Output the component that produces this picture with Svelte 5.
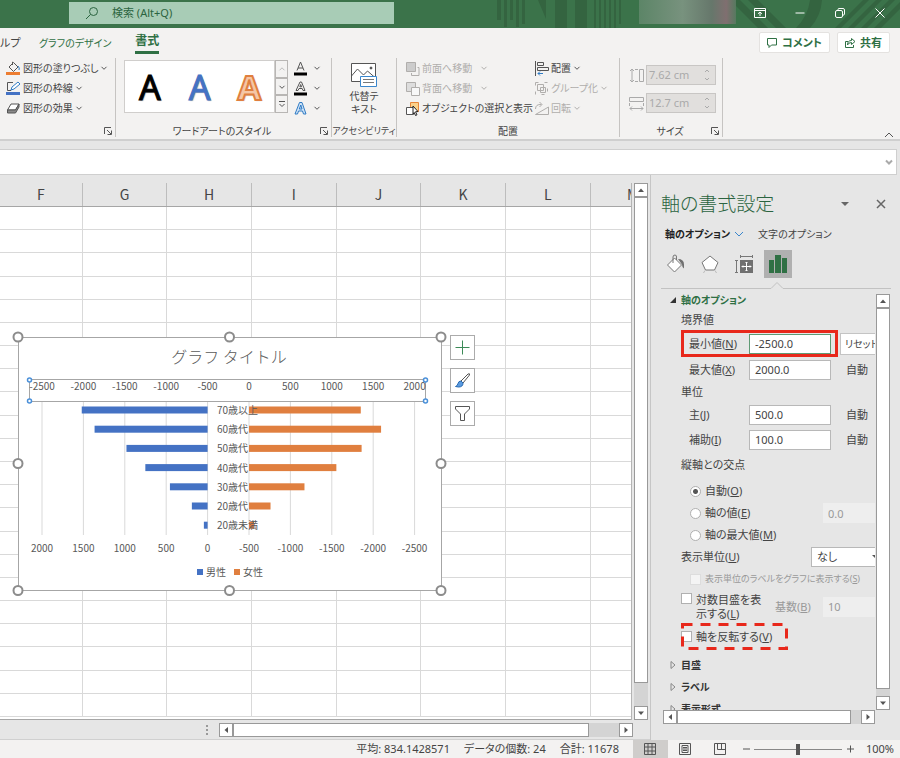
<script lang="ts">
  const columns = ['F', 'G', 'H', 'I', 'J', 'K', 'L', 'M'];
  const rows = Array.from({ length: 22 }, (_, i) => i);

  const ages = ['70歳以上', '60歳代', '50歳代', '40歳代', '30歳代', '20歳代', '20歳未満'];
  const men = [1520, 1365, 980, 752, 455, 190, 45];
  const women = [1350, 1595, 1360, 1055, 670, 260, 60];
  const topAxis = [-2500, -2000, -1500, -1000, -500, 0, 500, 1000, 1500, 2000];
  const bottomAxis = [2000, 1500, 1000, 500, 0, -500, -1000, -1500, -2000, -2500];

  // chart geometry
  const left = 32;
  const step = 41.4;
  const tick = (i: number) => left + i * step;
  const len = (v: number) => (v / 500) * step;
  const rowY = (i: number) => 82 + i * 19.2;
  const handles = [[8, 9], [219.5, 9], [431, 9], [8, 135.5], [431, 135.5], [8, 262.5], [219.5, 262.5], [431, 262.5]];

  let min = $state('-2500.0');
  let max = $state('2000.0');
  let major = $state('500.0');
  let minor = $state('100.0');
  let cross = $state('auto');
</script>

{#snippet chevron()}
  <svg class="chev" viewBox="0 0 8 8" width="8" height="8"><path d="M1.5 2.8 4 5.3 6.5 2.8" /></svg>
{/snippet}

{#snippet launcher()}
  <button class="launcher" aria-label="詳細">
    <svg viewBox="0 0 8 8" width="8" height="8"><path d="M.5 7V.5H7M3 3l4 4M7.5 3.500V7.500H3.500" /></svg>
  </button>
{/snippet}

{#snippet arrow(points: string, label: string)}
  <button class="arrow" aria-label={label}>
    <svg viewBox="0 0 8 8" width="8" height="8"><polygon {points} /></svg>
  </button>
{/snippet}

<div class="app">
  <header class="titlebar">
    <svg class="pattern" viewBox="0 0 410 28" width="410" height="28">
      <g fill="#346440">
        <path d="M7 0h4v20H7zM14 0h3v27h-3zM20 0h3v20h-3zM26 0h3v27h-3zM32 0h3v24h-3zM48 0h8v19zM65 0h12v28H65zM85 0h12v28H85zM104 0h2v28h-2zM109 0h2v28h-2zM114 0h2v28h-2zM119 0h2v28h-2zM124 0h2v28h-2zM129 0h2v24h-2z" />
        <path d="M240 0h10l28 28h-10zM258 0h10l28 28h-10zM320 0h12q-1 16-12 28h-14q12-12 14-28zM345 28 373 0h6l-28 28zM358 28 386 0h6l-28 28zM371 28 399 0h6l-28 28zM384 28l26-26v7l-19 19z" />
      </g>
    </svg>
    <label class="search">
      <svg viewBox="0 0 14 14" width="14" height="14"><circle cx="8.500" cy="5.500" r="4" /><path d="M5.500 8.500 1 13" /></svg>
      <input type="search" placeholder="検索 (Alt+Q)" />
    </label>
    <div class="account"></div>
    <div class="window">
      <button aria-label="リボンの表示オプション">
        <svg viewBox="0 0 12 12" width="12" height="12"><path d="M.5 1.500h11v9H.5zM.5 3.500h11M6 9V5M4 6.800 6 5l2 1.800" /></svg>
      </button>
      <button aria-label="最小化"><svg viewBox="0 0 12 12" width="12" height="12"><path d="M1.500 6h9" /></svg></button>
      <button aria-label="元に戻す">
        <svg viewBox="0 0 12 12" width="12" height="12"><rect x="1.500" y="3.500" width="7" height="7" rx="1.500" /><path d="M4 3V2.500Q4 1.500 5 1.500h4q1.500 0 1.500 1.500v4q0 1-1.500 1.200" /></svg>
      </button>
      <button aria-label="閉じる"><svg viewBox="0 0 12 12" width="12" height="12"><path d="m1.500 1.500 9 9m0-9-9 9" /></svg></button>
    </div>
  </header>

  <nav class="tabs">
    <a class="cut" href="#help">ルプ</a>
    <a class="context" href="#design">グラフのデザイン</a>
    <a class="current" href="#format">書式</a>
    <span class="grow"></span>
    <button>
      <svg viewBox="0 0 12 12" width="12" height="12"><path d="M1.500 1.500h9v6.500H5.500L3 10.500V8H1.500z" /></svg>コメント
    </button>
    <button>
      <svg viewBox="0 0 12 12" width="12" height="12"><path d="M4 4.500H1.500v6h8V8M7.500 1.500l3.500 3-3.500 3V5.500Q4.500 5.500 3.500 8q0-4.500 4-4.500z" /></svg>共有
    </button>
  </nav>

  <div class="ribbon">
    <section class="group shapes">
      <div class="stack">
        <button>
          <svg viewBox="0 0 15 15" width="15" height="15"><path d="M3 6 7.500 1.500 12 6 7.500 10.500zM6.500 4V.8" /><path d="M12 5q2 2 1 4" stroke="#2f7bc4" /><path d="M0 11h14v3H0z" fill="#ed7d31" stroke="none" /></svg>
          図形の塗りつぶし{@render chevron()}
        </button>
        <button>
          <svg viewBox="0 0 15 15" width="15" height="15"><path d="M7 1.500H1.500v8H5" /><path d="m5 9 1-3 6-5 2 2-6 5z" stroke="#2f7bc4" fill="#fff" /><path d="M0 11h14v3H0z" fill="#4472c4" stroke="none" /></svg>
          図形の枠線{@render chevron()}
        </button>
        <button>
          <svg viewBox="0 0 15 15" width="15" height="15"><path d="M1.500 9 5 3h8L9.500 9z" fill="#fff" /><path d="M1.500 9v3h8L13 6V3L9.500 9z" fill="#8a8a8a" /></svg>
          図形の効果{@render chevron()}
        </button>
      </div>
      <footer><span></span>{@render launcher()}</footer>
    </section>

    <section class="group wordart">
      <div class="body">
        <div class="gallery">
          <button class="sample black">A</button>
          <button class="sample blue">A</button>
          <button class="sample orange">A</button>
        </div>
        <div class="pager">
          <button class="off" aria-label="前へ"><svg viewBox="0 0 8 8" width="8" height="8"><path d="M1.500 5.300 4 2.800l2.500 2.500" /></svg></button>
          <button aria-label="次へ">{@render chevron()}</button>
          <button aria-label="その他"><svg viewBox="0 0 8 8" width="8" height="8"><path d="M1 1.500h6M1.500 4 4 6.500 6.500 4" /></svg></button>
        </div>
        <div class="stack letters">
          <button aria-label="文字の塗りつぶし"><svg viewBox="0 0 15 15" width="15" height="15"><path d="M4 9.500 7.500 1 11 9.500M5 7h5" /><path d="M1 11.500h13v3H1z" fill="#000" stroke="none" /></svg>{@render chevron()}</button>
          <button aria-label="文字の輪郭"><svg viewBox="0 0 15 15" width="15" height="15"><path d="m3 9.500 4-8.500h1.500l3.500 8.500h-2L9.200 7.500H6L5 9.500zM6.800 5.800 7.700 3.500l.9 2.300z" /><path d="M1 11.500h13v3H1z" fill="#000" stroke="none" /></svg>{@render chevron()}</button>
          <button aria-label="文字の効果"><svg viewBox="0 0 15 15" width="15" height="15"><path d="m2 13 4.500-11.500h2.500l4 11.500h-2.500l-1-3H5.500l-1 3zM6.300 8 7.800 4 9 8z" stroke="#2f7bc4" fill="#cfe3f7" /></svg>{@render chevron()}</button>
        </div>
      </div>
      <footer><span>ワードアートのスタイル</span>{@render launcher()}</footer>
    </section>

    <section class="group access">
      <button class="big">
        <svg viewBox="0 0 28 26" width="28" height="26"><path d="M1.500 1.500h24v18h-24z" fill="#fff" /><path d="m1.500 14 6-7 6 6 4-4 8 7" /><circle cx="21" cy="6" r="1" fill="#333" /><path d="M10.500 14.500h16v10h-16z" fill="#fff" stroke="#3a86cc" /><path d="M13 17.500h11M13 20.500h11" stroke="#777" /></svg>
        <span>代替テ<br />キスト</span>
      </button>
      <footer><span>アクセシビリティ</span></footer>
    </section>

    <section class="group arrange">
      <div class="body">
        <div class="stack">
          <button disabled>
            <svg viewBox="0 0 15 15" width="15" height="15"><path d="M1.500 1.500h9v9h-9z" fill="#ccc" /><path d="M12.500 6.500h1.500v8H6.500V12" /></svg>
            前面へ移動<i></i>{@render chevron()}
          </button>
          <button disabled>
            <svg viewBox="0 0 15 15" width="15" height="15"><path d="M1.500 1.500h9v9h-9z" fill="#ddd" /><path d="M6.500 6.500h8v8h-8z" fill="#f8f8f8" /></svg>
            背面へ移動<i></i>{@render chevron()}
          </button>
          <button>
            <svg viewBox="0 0 15 15" width="15" height="15"><path d="M5.500 1.500h8v9h-8z" fill="#fbd28b" stroke="#e8863a" /><path d="M1.500 6.500h7v7h-7z" fill="#fff" /><path d="m8 5 5 5.500-2.500.3 1.500 3-1.500.7-1.300-3L8 13z" fill="#fff" stroke="#222" /></svg>
            オブジェクトの選択と表示
          </button>
        </div>
        <div class="stack">
          <button>
            <svg viewBox="0 0 15 15" width="15" height="15"><path d="M1.500 0v15M3.500 1.500h6v3h-6zM3.500 6.500h11v3h-11z" /><path d="M9 12.500H4M6 10.500l-2 2 2 2" stroke="#2f7bc4" /></svg>
            配置{@render chevron()}
          </button>
          <button disabled>
            <svg viewBox="0 0 15 15" width="15" height="15"><path d="M3.500 3.500h6v6h-6zM6.500 6.500h5v5h-5z" /><path d="M1.500 1.500h12v12h-12z" stroke-dasharray="3 6" /></svg>
            グループ化{@render chevron()}
          </button>
          <button disabled>
            <svg viewBox="0 0 15 15" width="15" height="15"><path d="M1.500 13.500h13V6zM1.500 8q0-5 6-4.500M5.500 1l2.500 2.500L5.500 6" /></svg>
            回転{@render chevron()}
          </button>
        </div>
      </div>
      <footer><span>配置</span></footer>
    </section>

    <section class="group size">
      <div class="sizes">
        <label>
          <svg viewBox="0 0 15 15" width="15" height="15"><path d="M3 1v13M1 3l2-2 2 2M1 12l2 2 2-2M6 1.500h3M6 13.500h3M10.500 1.500h4v12h-4z" /></svg>
          <span class="spin"><input aria-label="高さ" value="7.62 cm" disabled /><svg viewBox="0 0 8 14" width="8" height="14"><path d="M2 4l2-2 2 2M2 10l2 2 2-2" /></svg></span>
        </label>
        <label>
          <svg viewBox="0 0 15 15" width="15" height="15"><path d="M.5 1.500h14v4H.5zM.5 7v3M14.500 7v3M1 12.500h13M3 10.500l-2 2 2 2M12 10.500l2 2-2 2" /></svg>
          <span class="spin"><input aria-label="幅" value="12.7 cm" disabled /><svg viewBox="0 0 8 14" width="8" height="14"><path d="M2 4l2-2 2 2M2 10l2 2 2-2" /></svg></span>
        </label>
      </div>
      <footer><span>サイズ</span>{@render launcher()}</footer>
    </section>
    <button class="collapse" aria-label="リボンを折りたたむ"><svg viewBox="0 0 10 8" width="10" height="8"><path d="m1 6 4-4 4 4" /></svg></button>
  </div>

  <div class="formula">
    <input aria-label="数式バー" />
    <svg viewBox="0 0 8 8" width="8" height="8"><path d="M1 2.500 4 5.500l3-3" /></svg>
  </div>

  <main>
    <div class="book">
      <div class="view">
        <div class="sheet">
          <div class="cols head">
            {#each columns as c}<div><span>{c}</span></div>{/each}
          </div>
          <div class="cells">
            {#each rows as r (r)}
              <div class="cols">{#each columns as c}<div></div>{/each}</div>
            {/each}
          </div>
        </div>
        <div class="vbar">
          {@render arrow('1,6 4,2.500 7,6', '上へ')}
          <div class="thumb"></div>
          {@render arrow('1,2.500 4,6 7,2.500', '下へ')}
        </div>

        <svg class="chart" viewBox="0 0 440 272" width="440" height="272">
          <rect x="8.500" y="9.500" width="423" height="253" fill="#fff" stroke="#a6a6a6" />
          <text class="title" x="219" y="35">グラフ タイトル</text>
          {#each topAxis as _, i}
            <path d="M{tick(i)} 73V207" stroke="#d9d9d9" />
          {/each}
          {#each ages as age, i}
            <rect x={tick(4) - len(men[i])} y={rowY(i) - 3.5} width={len(men[i])} height="7" fill="#4472c4" />
            <rect x={tick(5)} y={rowY(i) - 3.5} width={len(women[i])} height="7" fill="#e07f3f" />
            <text x="207" y={rowY(i) + 4}>{age}</text>
          {/each}
          <rect x="19.500" y="51.500" width="396" height="22" fill="#fff" stroke="#a6a6a6" />
          {#each topAxis as v, i}
            <text class="mid" x={tick(i)} y="62">{v}</text>
          {/each}
          {#each bottomAxis as v, i}
            <text class="mid" x={tick(i)} y="224">{v}</text>
          {/each}
          {#each [[19.5, 52], [415.5, 52], [19.5, 73], [415.5, 73]] as [x, y]}
            <circle cx={x} cy={y} r="2" fill="#fff" stroke="#4a90d9" stroke-width="1.500" />
          {/each}
          <rect x="187" y="241" width="6" height="6" fill="#4472c4" />
          <text x="196" y="248">男性</text>
          <rect x="224" y="241" width="6" height="6" fill="#e07f3f" />
          <text x="233" y="248">女性</text>
          {#each handles as [x, y]}
            <circle cx={x} cy={y} r="4.500" fill="#fff" stroke="#8c8c8c" stroke-width="2" />
          {/each}
        </svg>

        <div class="tools">
          <button aria-label="グラフ要素"><svg viewBox="0 0 17 17" width="17" height="17"><path d="M8.500 1.500v14M1.500 8.500h14" stroke="#3c8a57" /></svg></button>
          <button aria-label="グラフ スタイル">
            <svg viewBox="0 0 17 17" width="17" height="17"><path d="M7 9 14 2q2-1 1.500 1L9 11z" /><path d="M1.500 14.500q2-.5 2.500-3t3-2.500l2 2q0 4-4.500 4z" fill="#5b9be0" stroke="#2468b2" /></svg>
          </button>
          <button aria-label="グラフ フィルター"><svg viewBox="0 0 17 17" width="17" height="17"><path d="M1.500 1.500h14V4l-5 5v6.500h-4V9l-5-5z" /></svg></button>
        </div>
      </div>
      <div class="hrow">
        <svg class="grip" viewBox="0 0 3 12" width="3" height="12"><path d="M0 1h2v2H0zM0 5h2v2H0zM0 9h2v2H0z" /></svg>
        <div class="hbar">
          {@render arrow('6,1 2.500,4 6,7', '左へ')}
          <div class="thumb"></div>
          {@render arrow('2.500,1 6,4 2.500,7', '右へ')}
        </div>
      </div>
    </div>

    <aside>
      <div class="panehead">
        <h2>軸の書式設定</h2>
        <button aria-label="作業ウィンドウのオプション"><svg viewBox="0 0 10 10" width="10" height="10"><polygon points="1,3 9,3 5,7" fill="#666" stroke="none" /></svg></button>
        <button aria-label="閉じる"><svg viewBox="0 0 10 10" width="10" height="10"><path d="m1 1 8 8m0-8L1 9" stroke="#666" stroke-width="1.500" /></svg></button>
      </div>
      <div class="panetabs">
        <button class="on">軸のオプション<svg viewBox="0 0 10 8" width="10" height="8"><path d="m1 2 4 4 4-4" stroke="#3a86cc" /></svg></button>
        <button>文字のオプション</button>
      </div>
      <div class="kinds">
        <button aria-label="塗りつぶしと線">
          <svg viewBox="0 0 20 20" width="20" height="20"><path d="m1.500 11 7-7 7 7-7 7z" fill="#fff" /><path d="M7 9V3q0-2 2-2t1.500 3v2" /><path d="M12 5q6 0 6 5.500v4q-2-1-2-4z" fill="#707070" stroke="none" /></svg>
        </button>
        <button aria-label="効果">
          <svg viewBox="0 0 20 20" width="20" height="20"><path d="m10 2 8 6.500-3.500 7.500h-9L2 8.500z" fill="#fff" /><path d="M5 16.500 3.500 19M15 16.500l1.500 2.500" stroke="#bbb" /></svg>
        </button>
        <button aria-label="サイズとプロパティ">
          <svg viewBox="0 0 20 20" width="20" height="20"><path d="M6.500 2.500h12M6.500 1v3M18.500 1v3M2.500 6v13M1 6.500h3M1 18.500h3" /><path d="M6 6h13v13H6z" fill="#707070" stroke="none" /><path d="M12.500 8v9M8 12.500h9M11.500 9l1-1 1 1M11.500 16l1 1 1-1M9 11.500l-1 1 1 1M16 11.500l1 1-1 1" stroke="#fff" /></svg>
        </button>
        <button class="on" aria-label="軸のオプション">
          <svg viewBox="0 0 20 20" width="20" height="20"><path d="M1 6h5v13H1zM7 1h6v18H7zM14 4h5v15h-5z" fill="#2f7044" stroke="none" /></svg>
        </button>
      </div>
      <svg class="notch" viewBox="0 0 230 9" width="230" height="9"><path d="M0 7.500h110l6-6 6 6h108" /></svg>

      <div class="scroller">
        <div class="port">
          <form class="options">
            <h3 class="open"><svg viewBox="0 0 8 8" width="8" height="8"><polygon points="7,1 7,7 1,7" /></svg>軸のオプション</h3>
            <h4>境界値</h4>
            <div class="line first">
              <div class="marked">
                <label for="min">最小値(<u>N</u>)</label>
                <input id="min" class="focus" bind:value={min} />
              </div>
              <button type="button" class="reset">リセット(R)</button>
            </div>
            <div class="line field"><label for="max">最大値(<u>X</u>)</label><input id="max" bind:value={max} /><span>自動</span></div>
            <h4>単位</h4>
            <div class="line field"><label for="major">主(<u>J</u>)</label><input id="major" bind:value={major} /><span>自動</span></div>
            <div class="line field"><label for="minor">補助(<u>I</u>)</label><input id="minor" bind:value={minor} /><span>自動</span></div>
            <h4 class="cross">縦軸との交点</h4>
            <div class="line in"><label><input type="radio" value="auto" bind:group={cross} />自動(<u>O</u>)</label></div>
            <div class="line in">
              <label><input type="radio" value="value" bind:group={cross} />軸の値(<u>E</u>)</label>
              <input class="side" aria-label="軸の値" value="0.0" disabled />
            </div>
            <div class="line in"><label><input type="radio" value="max" bind:group={cross} />軸の最大値(<u>M</u>)</label></div>
            <div class="line">
              <label for="unit">表示単位(<u>U</u>)</label>
              <div class="select">
                <select id="unit"><option>なし</option></select>
                <svg viewBox="0 0 8 8" width="8" height="8"><polygon points="1,2 7,2 4,5" /></svg>
              </div>
            </div>
            <div class="line in off small"><label><input type="checkbox" disabled />表示単位のラベルをグラフに表示する(<u>S</u>)</label></div>
            <div class="line log">
              <label><input type="checkbox" /><span>対数目盛を表<br />示する(<u>L</u>)</span></label>
              <label class="off" for="base">基数(<u>B</u>)</label>
              <input id="base" class="side" value="10" disabled />
            </div>
            <div class="line reverse">
              <label><input type="checkbox" />軸を反転する(<u>V</u>)</label>
              <svg viewBox="0 0 107 27" width="107" height="27"><rect x="1.500" y="1.500" width="104" height="24" /></svg>
            </div>
            {#each ['目盛', 'ラベル', '表示形式'] as name}
              <h3><svg viewBox="0 0 8 8" width="8" height="8"><path d="M2 .5 6 4 2 7.500z" /></svg>{name}</h3>
            {/each}
          </form>
        </div>
        <div class="vbar">
          {@render arrow('1,6 4,2.500 7,6', '上へ')}
          <div class="thumb"></div>
          {@render arrow('1,2.500 4,6 7,2.500', '下へ')}
        </div>
      </div>
      <div class="hbar">
        {@render arrow('6,1 2.500,4 6,7', '左へ')}
        <div class="thumb"></div>
        {@render arrow('2.500,1 6,4 2.500,7', '右へ')}
      </div>
    </aside>
  </main>

  <footer class="status">
    <span>平均: 834.1428571</span>
    <span>データの個数: 24</span>
    <span>合計: 11678</span>
    <div class="modes">
      <button class="on" aria-label="標準"><svg viewBox="0 0 14 12" width="14" height="12"><path d="M1.500.5h11v11h-11zM5 .5v11M9 .5v11M1.500 4h11M1.500 8h11" /></svg></button>
      <button aria-label="ページ レイアウト"><svg viewBox="0 0 14 12" width="14" height="12"><path d="M1.500.5h11v11h-11zM4 2.500h6v7H4zM5 4.500h4M5 6h4M5 7.500h4" /></svg></button>
      <button aria-label="改ページ プレビュー"><svg viewBox="0 0 14 12" width="14" height="12"><path d="M1.500.5h11v11h-11zM4.500.5v6h8M8.500.5v6" /></svg></button>
    </div>
    <button class="zoom" aria-label="縮小"><svg viewBox="0 0 8 8" width="8" height="8"><path d="M1 4h7" /></svg></button>
    <input type="range" aria-label="ズーム" min="0" max="100" value="50" />
    <button class="zoom" aria-label="拡大"><svg viewBox="0 0 8 8" width="8" height="8"><path d="M1 4h7M4.500 .5v7" /></svg></button>
    <span class="percent">100%</span>
  </footer>
</div>

<style>
:global(body) { margin: 0; }
.app {
  display: flex;
  flex-direction: column;
  height: 100vh;
  overflow: hidden;
  background: #e6e6e6;
  color: #444;
  font-family: "Noto Sans", "Noto Sans CJK JP", sans-serif;
  font-feature-settings: "palt";
  font-size: 11px;
  line-height: 14px;
  white-space: nowrap;
}
* { box-sizing: border-box; }
button, input, select {
  font: inherit;
  font-feature-settings: inherit;
  color: inherit;
  margin: 0;
  padding: 0;
  border: 0;
  background: none;
  border-radius: 0;
}
svg { flex: none; display: block; fill: none; stroke: #555; }
h2, h3, h4 { margin: 0; font-size: 11px; font-weight: 400; }

.titlebar { position: relative; flex: none; display: flex; height: 28px; background: #3b734a; }
.pattern { position: absolute; right: 0; top: 0; stroke: none; }
.search {
  display: flex;
  align-items: center;
  gap: 13px;
  flex: 0 1 325px;
  height: 22px;
  margin: 2px 0 0 69px;
  padding-left: 16px;
  background: #a8ccb6;
  color: #2b6440;
}
.search svg { stroke: #2b6440; }
.search input { flex: 1; min-width: 0; }
.search input::placeholder { color: #2b6440; opacity: 1; }
.account {
  position: relative;
  width: 97px;
  height: 24px;
  margin-left: auto;
  background: linear-gradient(90deg, #5c8567, #78927e 45%, #66776b 75%, #806f70 90%, #56795f);
}
.window { position: relative; display: flex; align-items: center; height: 25px; padding-left: 4px; }
.window button { display: flex; justify-content: center; width: 40px; }
.window svg { stroke: #fff; }

.tabs { flex: none; display: flex; align-items: center; height: 29px; padding-right: 10px; background: #f3f2f1; font-size: 12px; }
.tabs a { color: #444; text-decoration: none; }
.tabs .cut { width: 18px; font-size: 11px; }
.tabs .context { color: #2f7044; margin: 0 24px 0 21px; font-size: 10px; }
.tabs .current { color: #2f7044; font-weight: 700; height: 22px; padding-top: 2px; box-shadow: inset 0 -3px #2f7044; }
.grow { flex: 1; }
.tabs button {
  display: flex;
  align-items: center;
  gap: 4px;
  height: 21px;
  margin-left: 7px;
  padding: 0 7px 0 6px;
  background: #fff;
  border: 1px solid #e4e2e0;
  border-radius: 2px;
  color: #2f7044;
  font-weight: 700;
  font-size: 11px;
}
.tabs button svg { stroke: #2f7044; }

.ribbon { flex: none; display: flex; height: 84px; background: #f3f2f1; border-bottom: 2px solid #cfcfcf; font-size: 10px; }
.group { display: flex; flex-direction: column; justify-content: space-between; border-right: 1px solid #c6c4c2; margin: 1px 0 2px; padding: 0 3px; }
.group footer { display: flex; align-items: center; height: 12px; line-height: 12px; }
.group footer span { flex: 1; text-align: center; }
.launcher svg { stroke: #555; }
.shapes { width: 116px; padding-left: 6px; }
.wordart { width: 216px; padding-left: 8px; }
.access { width: 65px; padding: 0; align-items: center; }
.access footer { font-size: 9px; }
.arrange { width: 223px; padding: 0 8px; }
.size { width: 103px; padding-left: 9px; }
.stack { display: flex; flex-direction: column; }
.stack button { display: flex; align-items: center; height: 20px; gap: 2px; }
.stack button:disabled { color: #b0aeac; }
.stack button:disabled svg { stroke: #b0aeac; }
.stack i { width: 4px; }
.body { display: flex; }
.gallery { display: flex; width: 151px; height: 53px; margin-top: 2px; background: #fff; border: 1px solid #d0cecc; }
.sample { flex: 1; font: 34px/50px "Noto Sans", sans-serif; text-shadow: 1px 1px 1px #aaa; }
.black { color: #000; -webkit-text-stroke: 1px #000; }
.blue { color: #4472c4; -webkit-text-stroke: 1px #4472c4; }
.orange { color: #f5c6a5; font-weight: 700; -webkit-text-stroke: 2px #e07f3f; }
.pager { display: flex; flex-direction: column; width: 13px; height: 53px; margin-top: 2px; }
.pager button { flex: 1; display: flex; align-items: center; justify-content: center; border: 1px solid #b8b6b4; }
.pager .off svg { stroke: #bbb; }
.letters { margin-left: 5px; }
.letters button { gap: 5px; }
.big { display: flex; flex-direction: column; align-items: center; gap: 2px; padding-top: 4px; line-height: 13px; }
.arrange .body { gap: 1px; }
.sizes { display: flex; flex-direction: column; gap: 8px; padding-top: 7px; font-size: 11px; }
.sizes label { display: flex; align-items: center; gap: 2px; }
.sizes svg { stroke: #aaa; }
.spin { display: flex; align-items: center; width: 70px; height: 20px; padding: 0 4px 0 2px; background: #e1dfdd; border: 1px solid #c8c6c4; color: #aaa; }
.spin input { flex: 1; min-width: 0; }
.collapse { margin: auto 6px 0 auto; }

.formula { flex: none; display: flex; align-items: center; height: 26px; margin: 8px 3px 0 0; padding-right: 3px; background: #fff; border: 1px solid #cfcfcf; border-left: 0; }
.formula input { flex: 1; }
.formula svg { stroke: #aaa; stroke-width: 2; }

main { flex: 1; display: flex; min-height: 0; }
.book { flex: 1; min-width: 0; display: flex; flex-direction: column; border-right: 1px solid #c6c6c6; }
.view { position: relative; flex: 1; display: flex; min-height: 0; padding: 8px 2px 0 0; }
.sheet { flex: 1; min-width: 0; display: flex; flex-direction: column; border-right: 1px solid #b4b4b4; background: #fff; }
.cols { display: grid; grid-template-columns: 84fr repeat(6, 86fr) 41fr; }
.cols div { min-width: 0; border-right: 1px solid #d9d9d9; border-bottom: 1px solid #d9d9d9; }
.cols div:last-child { border-right: 0; }
.head { height: 24px; background: #e6e6e6; border-bottom: 1px solid #a6a6a6; font: 14px/22px "Noto Sans CJK JP", sans-serif; }
.head div { overflow: hidden; text-align: center; border-bottom: 0; border-right-color: #bdbdbd; }
.head div:last-child span { display: block; width: 84px; }
.cells { flex: 1; display: grid; grid-template-rows: repeat(22, 1fr); padding-bottom: 2px; border-bottom: 1px solid #a6a6a6; }

.vbar, .hbar { display: flex; background: #d4d4d4; }
.vbar { flex: none; flex-direction: column; width: 14px; }
.view .vbar { margin-left: 2px; }
.hbar { height: 14px; }
.thumb { background: #fff; border: 1px solid #999; }
.vbar .thumb { flex: 1; margin-bottom: 23px; }
.hbar .thumb { flex: 1; margin-right: 30px; }
.arrow { flex: none; display: flex; align-items: center; justify-content: center; width: 14px; height: 14px; background: #fff; border: 1px solid #999; }
.arrow svg { fill: #555; stroke: none; }
.hrow { flex: none; display: flex; align-items: center; height: 20px; padding-right: 17px; border-bottom: 1px solid #d0d0d0; }
.grip { fill: #999; stroke: none; margin-left: 206px; }
.hrow .hbar { flex: 1; margin-left: 10px; }

.chart { position: absolute; left: 10px; top: 153px; stroke: none; }
.chart text { font: 10px "Noto Sans CJK JP", sans-serif; fill: #595959; }
.chart .mid { text-anchor: middle; }
.chart .title { font-size: 16px; font-weight: 300; text-anchor: middle; font-feature-settings: normal; }
.tools { position: absolute; left: 450px; top: 160px; display: flex; flex-direction: column; gap: 8px; }
.tools button { display: flex; align-items: center; justify-content: center; width: 25px; height: 25px; background: #fff; border: 1px solid #ababab; }

aside { flex: none; width: 249px; display: flex; flex-direction: column; padding: 15px 10px 16px; }
.panehead { display: flex; align-items: center; height: 28px; }
.panehead h2 { flex: 1; font-size: 19px; line-height: 28px; font-weight: 300; color: #2b6440; }
.panehead button { margin-left: 26px; }
.panehead button:last-child { margin-right: 4px; }
.panetabs { display: flex; align-items: center; gap: 14px; height: 32px; padding-left: 4px; font-size: 10px; }
.panetabs button { display: flex; align-items: center; gap: 4px; }
.panetabs .on { font-weight: 700; color: #222; }
.kinds { display: flex; gap: 6px; padding-left: 1px; }
.kinds button { display: flex; align-items: center; justify-content: center; width: 28px; height: 28px; }
.kinds .on { background: #b0b0b0; }
.kinds svg { stroke: #777; }
.notch { margin-top: 3px; stroke: #c2c2c2; }
.scroller { flex: 1; display: flex; justify-content: space-between; min-height: 0; }
.scroller .vbar { margin-top: 4px; }
.scroller .vbar .thumb { margin-bottom: 7px; }
.port { width: 214px; overflow: hidden; }
aside .hbar { flex: none; width: 212px; margin-left: 2px; }
aside .hbar .thumb { margin-right: 10px; }

.options { width: 260px; padding: 0 0 0 20px; }
h3 { display: flex; align-items: center; gap: 4px; height: 22px; margin-left: -12px; font-size: 10px; font-weight: 700; color: #333; }
h3 svg { stroke: #888; }
h3.open { height: 20px; color: #2f7044; }
h3.open svg { fill: #333; stroke: none; }
h4 { height: 20px; line-height: 20px; }
h4.cross { height: 28px; line-height: 26px; }
.line { display: flex; align-items: center; height: 22px; }
.line label { display: flex; align-items: center; }
.line input:not([type]), .side { width: 82px; height: 20px; padding-left: 5px; background: #fff; border: 1px solid #b8b8b8; }
.line input.focus { border-color: #5f9a74; }
.first { height: 27px; gap: 2px; }
.marked { display: flex; align-items: center; width: 157px; height: 27px; padding-left: 5px; border: 3px solid #e8281b; }
.marked label { width: 60px; }
.reset { width: 80px; height: 22px; padding-left: 4px; background: #fff; border: 1px solid #c4c4c4; text-align: left; font-size: 10px; }
.field { height: 25px; padding-left: 8px; }
.field label { width: 60px; }
.field span { margin-left: 15px; }
.in { padding-left: 9px; }
.off { color: #999; }
.small { font-size: 9px; }
.line .side:disabled { width: 100px; margin-left: auto; margin-right: -2px; background: #eee; border: 0; color: #999; }
input[type="radio"], input[type="checkbox"] { appearance: none; flex: none; width: 11px; height: 11px; margin-right: 4px; background: #fff; border: 1px solid #b0b0b0; }
input[type="radio"] { border-radius: 50%; }
input[type="radio"]:checked { background: radial-gradient(#555 0 2px, #fff 3px); }
input[type="checkbox"]:disabled { border-color: #ddd; background: #f4f4f4; }
.select { position: relative; width: 110px; height: 20px; margin-left: auto; }
.select select { appearance: none; width: 100%; height: 20px; padding-left: 5px; background: #fff; border: 1px solid #b8b8b8; }
.select svg { position: absolute; left: 60px; top: 6px; fill: #555; stroke: none; }
.log { height: 33px; }
.log label:first-child { align-items: flex-start; width: 94px; }
.reverse { position: relative; height: 27px; margin-bottom: 4px; }
.reverse svg { position: absolute; left: 0; top: 0; stroke: #e8281b; stroke-width: 3; stroke-dasharray: 10 8; pointer-events: none; }

.status { flex: none; display: flex; align-items: center; justify-content: flex-end; height: 18px; padding-right: 6px; background: #f3f2f1; }
.status > span { margin-right: 14px; }
.modes { display: flex; }
.modes button { display: flex; align-items: center; justify-content: center; width: 35px; height: 18px; }
.modes .on { background: #cfcdcb; }
.zoom { margin: 0 4px; }
input[type="range"] { appearance: none; width: 88px; height: 14px; background: linear-gradient(#888, #888) center / 100% 1px no-repeat; }
input[type="range"]::-webkit-slider-thumb { appearance: none; width: 4px; height: 11px; background: #555; }
.status .percent { margin: 0 0 0 8px; }
</style>
